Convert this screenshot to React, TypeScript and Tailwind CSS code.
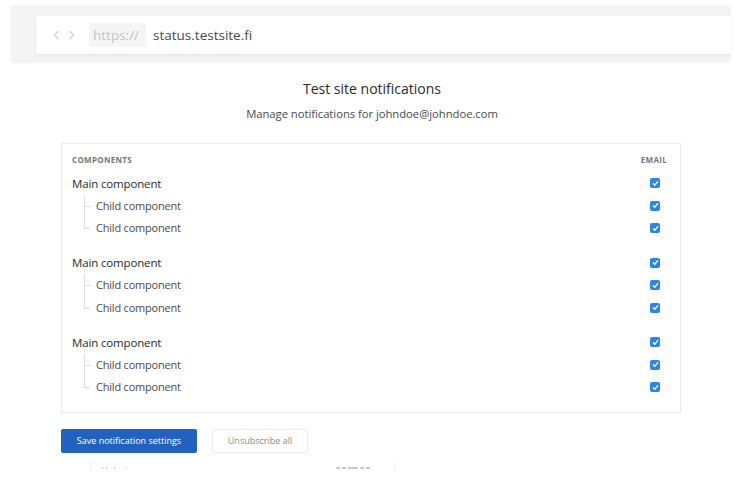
import React from "react";

const font = { fontFamily: '"Open Sans", "Liberation Sans", sans-serif' };

function Check() {
  return (
    <div className="w-[10px] h-[10px] rounded-[2px] bg-[#2b86e6] flex items-center justify-center">
      <svg width="7" height="7" viewBox="0 0 8 8">
        <path d="M1.5 4.3 L3.2 6 L6.5 1.8" stroke="white" strokeWidth="1.5" fill="none" strokeLinecap="round" strokeLinejoin="round" />
      </svg>
    </div>
  );
}

function MainRow({ label }: { label: string }) {
  return (
    <div className="h-[22.5px] flex items-center">
      <div className="flex-1 text-[11.5px] text-[#2a2a2a] tracking-[-0.15px]">{label}</div>
      <div className="w-[27px] flex justify-center pl-[3px]">
        <Check />
      </div>
    </div>
  );
}

function ChildRow({ last }: { last: boolean }) {
  return (
    <div className="h-[22.5px] flex items-center">
      <div className="relative w-[13px] h-full ml-[12px]">
        <div className={`absolute left-0 top-0 w-px bg-[#dcdcdc] ${last ? "h-1/2" : "h-full"}`} />
        <div className="absolute left-0 top-1/2 w-[6px] h-px bg-[#dcdcdc]" />
      </div>
      <div className="flex-1 text-[11px] text-[#4a4a4a] tracking-[-0.2px] -ml-[1px]">Child component</div>
      <div className="w-[27px] flex justify-center pl-[3px]">
        <Check />
      </div>
    </div>
  );
}

function Group({ last }: { last?: boolean }) {
  return (
    <div className={last ? "" : "mb-[12px]"}>
      <MainRow label="Main component" />
      <ChildRow last={false} />
      <ChildRow last={true} />
    </div>
  );
}

export default function App() {
  return (
    <div className="w-[744px] h-[479px] bg-white overflow-hidden relative" style={font}>
      {/* browser bar */}
      <div className="mt-[5px] ml-[11px] w-[720px] h-[58px] bg-[#f4f4f4] pt-[11px] pl-[25px]">
        <div className="h-[38px] bg-white shadow-[0_1px_3px_rgba(0,0,0,0.08)] flex items-center pl-[17px]">
          <svg width="7" height="10" viewBox="0 0 7 10">
            <path d="M5.5 1 L1.5 5 L5.5 9" stroke="#cfcfcf" strokeWidth="1.1" fill="none" />
          </svg>
          <svg width="7" height="10" viewBox="0 0 7 10" className="ml-[8px]">
            <path d="M1.5 1 L5.5 5 L1.5 9" stroke="#cfcfcf" strokeWidth="1.1" fill="none" />
          </svg>
          <div className="ml-[14px] h-[24px] w-[57px] bg-[#f5f5f5] rounded-[2px] flex items-center pl-[4px] text-[13.5px] text-[#c3c3c3]">
            https://
          </div>
          <div className="ml-[7px] text-[13.5px] text-[#4a4a4a]">status.testsite.fi</div>
        </div>
      </div>

      {/* title */}
      <div className="mt-[17px] text-center text-[14px] text-[#2a2a2a] leading-[18px]">Test site notifications</div>
      <div className="mt-[8px] text-center text-[11.3px] text-[#4a4a4a] leading-[16px] tracking-[-0.05px]">
        Manage notifications for johndoe@johndoe.com
      </div>

      {/* card */}
      <div className="mt-[21px] ml-[61px] w-[620px] h-[270px] border border-[#ececec] pl-[10px] pr-[13px] pt-[11px]">
        <div className="h-[10px] flex items-center text-[8px] font-bold text-[#777] tracking-[0.3px]">
          <div className="flex-1">COMPONENTS</div>
          <div>EMAIL</div>
        </div>
        <div className="mt-[7px]">
          <Group />
          <Group />
          <Group last />
        </div>
      </div>

      {/* buttons */}
      <div className="mt-[16px] ml-[61px] flex gap-[15px]">
        <button className="w-[136px] h-[24px] bg-[#2361be] rounded-[2px] text-white text-[9px] flex items-center justify-center">
          Save notification settings
        </button>
        <button className="w-[96px] h-[24px] border border-[#ebebeb] rounded-[2px] text-[#8a8a8a] text-[9px] flex items-center justify-center">
          Unsubscribe all
        </button>
      </div>

      {/* cut-off content below (only the tops of glyphs are visible) */}
      <div className="mt-[9px] ml-[90px] w-[305px] h-[8px] border-l border-r border-[#eeeeee] relative">
        <div className="absolute left-[11px] top-[5px] flex gap-[3px]">
          <div className="w-[1px] h-[2px] bg-[#c8c8c8]" />
          <div className="w-[1px] h-[2px] bg-[#c8c8c8]" />
          <div className="w-[1px] h-[2px] bg-[#c8c8c8] ml-[4px]" />
          <div className="w-[1px] h-[1px] bg-[#c8c8c8] ml-[8px]" />
        </div>
        <div className="absolute left-[245px] top-[5px] flex gap-[2px]">
          <div className="w-[4px] h-[2px] bg-[#c8c8c8]" />
          <div className="w-[4px] h-[2px] bg-[#c8c8c8]" />
          <div className="w-[10px] h-[2px] bg-[#c8c8c8]" />
          <div className="w-[4px] h-[2px] bg-[#c8c8c8]" />
          <div className="w-[4px] h-[2px] bg-[#c8c8c8]" />
        </div>
      </div>
    </div>
  );
}
